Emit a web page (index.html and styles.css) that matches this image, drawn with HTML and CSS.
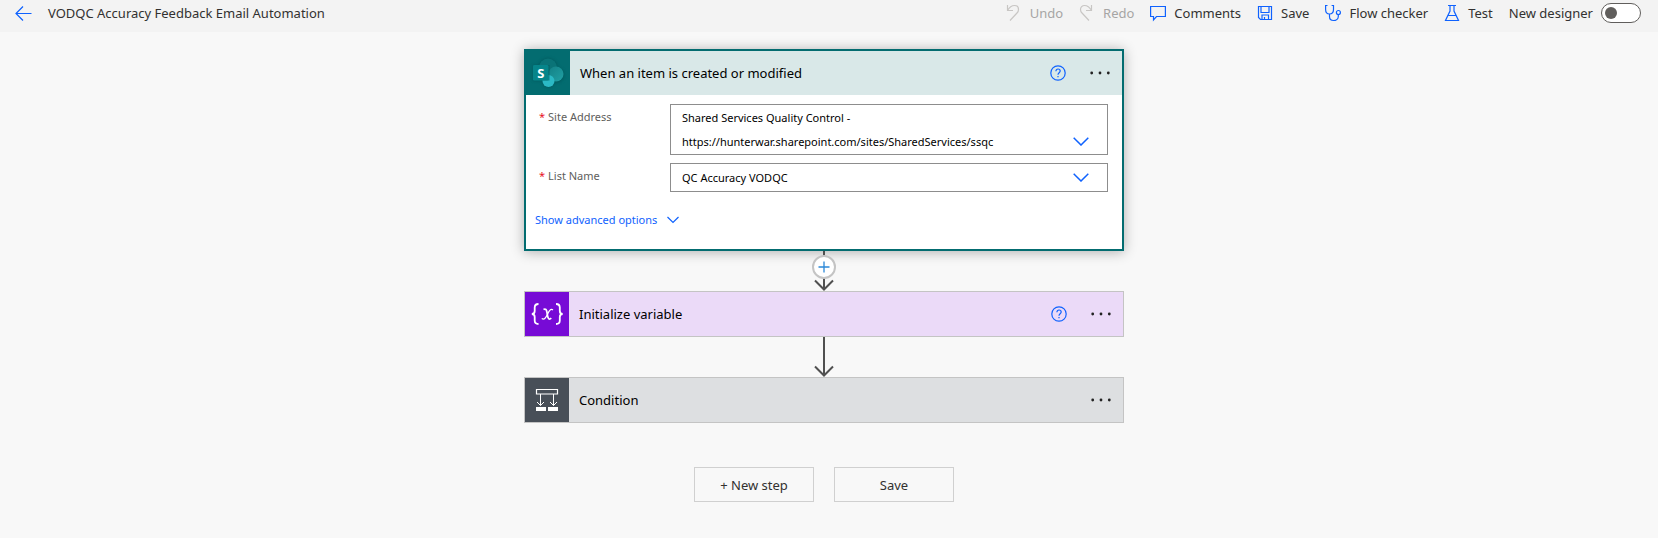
FILE: index.html
```html
<!DOCTYPE html>
<html lang="en">
<head>
<meta charset="utf-8">
<meta name="viewport" content="width=device-width, initial-scale=1">
<title>VODQC Accuracy Feedback Email Automation</title>
<link rel="stylesheet" href="styles.css">
</head>
<body>
<header class="topbar">
  <button class="back" type="button" aria-label="Back">
    <svg width="18" height="16" viewBox="0 0 18 16" class="line"><path d="M16.500 8.500H1M8 1.500l-7 7 7 7"/></svg>
  </button>
  <h1 class="title">VODQC Accuracy Feedback Email Automation</h1>
  <nav class="tools" aria-label="Flow commands">
    <button class="tool" type="button" disabled>
      <svg width="16" height="18" viewBox="0 0 16 18" class="line"><path d="M1.500 1v5.500H7M1.500 6.500C3.500 3 6 1.500 8.500 1.500c2.300 0 4 1.700 4 4 0 1.500-.6 2.600-1.500 3.500L4 16.500"/></svg>
      <span>Undo</span>
    </button>
    <button class="tool" type="button" disabled>
      <svg width="16" height="18" viewBox="0 0 16 18" class="line"><path d="M12.500 1v5.500H7M12.500 6.500C10.500 3 8 1.500 5.500 1.500c-2.300 0-4 1.700-4 4 0 1.500.6 2.600 1.500 3.500l7 7.500"/></svg>
      <span>Redo</span>
    </button>
    <button class="tool" type="button">
      <svg width="16" height="18" viewBox="0 0 16 18" class="line"><path d="M.6 2.500h14.800v10H6.500L3.500 16v-3.500H.6z"/></svg>
      <span>Comments</span>
    </button>
    <button class="tool" type="button">
      <svg width="16" height="18" viewBox="0 0 16 18" class="line"><path d="M1.500 2.500h13v13H3.500l-2-2zM4 2.500v6h8v-6M5 15.500v-4.500h6.500v4.500M7.500 13v2.500"/></svg>
      <span>Save</span>
    </button>
    <button class="tool" type="button">
      <svg width="16" height="18" viewBox="0 0 16 18" class="line"><path d="M2.500 1.500H.6v4c0 2.800 1.600 4.500 3.900 4.500s4-1.700 4-4.500v-4H6.600M4.500 10v2.500c0 2.500 1.500 4 4 4s4.800-1.500 4.800-4v-2"/><circle cx="13.400" cy="8.500" r="2"/></svg>
      <span>Flow checker</span>
    </button>
    <button class="tool" type="button">
      <svg width="16" height="18" viewBox="0 0 16 18" class="line"><path d="M4 1.500h8M6 1.500v5.500L1.500 16.500h13L10 7V1.500M3.800 11.500h8.400"/></svg>
      <span>Test</span>
    </button>
    <label class="designer">New designer<input class="switch" type="checkbox" role="switch"></label>
  </nav>
</header>

<main class="canvas">
  <section class="card card-trigger">
    <div class="card-head">
      <span class="tile tile-sharepoint">
        <svg width="44" height="44" viewBox="0 0 44 44" aria-hidden="true">
          <defs>
            <filter id="soft" x="-30%" y="-30%" width="160%" height="160%"><feGaussianBlur stdDeviation="1.500"/></filter>
            <linearGradient id="mid" x1="0" y1="0" x2="1" y2="1"><stop offset="0" stop-color="#138186"/><stop offset="1" stop-color="#21a0a4"/></linearGradient>
          </defs>
          <g filter="url(#soft)" fill="#004f52" opacity=".55"><circle cx="22" cy="17" r="10"/><circle cx="30" cy="24" r="8"/><rect x="7" y="14" width="16" height="16"/><circle cx="22.500" cy="30" r="6.500"/></g>
          <circle cx="22" cy="16.500" r="9" fill="#0a7377"/>
          <circle cx="30" cy="23" r="7.500" fill="url(#mid)"/>
          <circle cx="22.500" cy="30" r="6" fill="#2bb9c5"/>
          <path d="M16 14h7.500v15.500H17l-1-2z" fill="#005356" opacity=".55"/>
          <rect x="7" y="14" width="15.500" height="15.500" rx="1.300" fill="#06858a"/>
          <text x="14.800" y="26.500" class="logo-letter">S</text>
        </svg>
      </span>
      <h2 class="card-title">When an item is created or modified</h2>
      <button class="icon-btn help" type="button" aria-label="Help"><svg width="16" height="16" viewBox="0 0 16 16" class="line"><circle cx="8" cy="8" r="7.200"/><path d="M5.900 6.200C5.900 4.800 6.800 4 8 4s2.200.8 2.200 2c0 1.700-2.200 1.800-2.200 3.700M8 11v1.300"/></svg></button>
      <button class="icon-btn more" type="button" aria-label="More"><svg width="20" height="4" viewBox="0 0 20 4"><circle cx="1.700" cy="2" r="1.400"/><circle cx="10" cy="2" r="1.400"/><circle cx="18.300" cy="2" r="1.400"/></svg></button>
    </div>
    <div class="card-body">
      <div class="field">
        <label class="field-label" for="site"><span class="req">*</span>Site Address</label>
        <button class="combo" id="site" type="button" role="combobox" aria-haspopup="listbox" aria-expanded="false">
          <span>Shared Services Quality Control -<br>https://hunterwar.sharepoint.com/sites/SharedServices/ssqc</span>
          <svg width="16" height="9" viewBox="0 0 16 9" class="chev"><path d="M.7.7 8 8 15.300.7"/></svg>
        </button>
      </div>
      <div class="field">
        <label class="field-label" for="list"><span class="req">*</span>List Name</label>
        <div class="select-wrap">
          <select class="select" id="list"><option>QC Accuracy VODQC</option></select>
          <svg width="16" height="9" viewBox="0 0 16 9" class="chev"><path d="M.7.7 8 8 15.300.7"/></svg>
        </div>
      </div>
      <button class="advanced" type="button">Show advanced options
        <svg width="12" height="8" viewBox="0 0 12 8" class="line"><path d="M.5 1 6 6.500 11.500 1"/></svg>
      </button>
    </div>
  </section>

  <div class="connector">
    <svg width="20" height="40" viewBox="0 0 20 40" class="arrow" aria-hidden="true"><path d="M10 0v38M1 29.500l9 9 9-9"/></svg>
    <button class="add" type="button" aria-label="Insert a new step"><svg width="12" height="12" viewBox="0 0 12 12"><path d="M6 .5v11M.5 6h11"/></svg></button>
  </div>

  <section class="card card-variable">
    <div class="card-head">
      <span class="tile tile-variable">
        <svg width="44" height="44" viewBox="0 0 44 44" class="glyph" aria-hidden="true">
          <path d="M13.500 12c-3 0-3.800 1-3.800 3.500v3.500c0 2-.9 3-2.900 3 2 0 2.900 1 2.900 3v3.500c0 2.500.8 3.500 3.800 3.500M31 12c3 0 3.800 1 3.800 3.500v3.500c0 2 .9 3 2.900 3-2 0-2.900 1-2.900 3v3.500c0 2.500-.8 3.500-3.800 3.500" stroke-width="1.800"/>
          <path d="M18.500 17.500c2-1.300 3 .2 3.500 3l.6 3.500c.5 2.800 1.600 4.100 3.700 2.200" stroke-width="1.700"/><path d="M28 18c-2.500-2-4.200 1.500-5.600 4.500s-3 5.700-5.700 4" stroke-width="1.200"/>
        </svg>
      </span>
      <h2 class="card-title">Initialize variable</h2>
      <button class="icon-btn help" type="button" aria-label="Help"><svg width="16" height="16" viewBox="0 0 16 16" class="line"><circle cx="8" cy="8" r="7.200"/><path d="M5.900 6.200C5.900 4.800 6.800 4 8 4s2.200.8 2.200 2c0 1.700-2.200 1.800-2.200 3.700M8 11v1.300"/></svg></button>
      <button class="icon-btn more" type="button" aria-label="More"><svg width="20" height="4" viewBox="0 0 20 4"><circle cx="1.700" cy="2" r="1.400"/><circle cx="10" cy="2" r="1.400"/><circle cx="18.300" cy="2" r="1.400"/></svg></button>
    </div>
  </section>

  <div class="connector">
    <svg width="20" height="40" viewBox="0 0 20 40" class="arrow" aria-hidden="true"><path d="M10 0v38M1 29.500l9 9 9-9"/></svg>
  </div>

  <section class="card card-condition">
    <div class="card-head">
      <span class="tile tile-condition">
        <svg width="44" height="44" viewBox="0 0 44 44" class="glyph" aria-hidden="true">
          <path d="M11.500 11.500h21v4.500h-21z" stroke-width="1.200"/>
          <path d="M15.500 16v11.500M12 24l3.500 3.500 3.500-3.500M28.500 16v11.500M25 24l3.500 3.500 3.500-3.500" stroke-width="1"/>
          <path d="M11 29h10v4H11zM23 29h10v4H23z" class="solid"/>
        </svg>
      </span>
      <h2 class="card-title">Condition</h2>
      <button class="icon-btn more" type="button" aria-label="More"><svg width="20" height="4" viewBox="0 0 20 4"><circle cx="1.700" cy="2" r="1.400"/><circle cx="10" cy="2" r="1.400"/><circle cx="18.300" cy="2" r="1.400"/></svg></button>
    </div>
  </section>

  <div class="actions">
    <button class="action" type="button">+ New step</button>
    <button class="action" type="button">Save</button>
  </div>
</main>
</body>
</html>
```
FILE: styles.css
```css
* { box-sizing: border-box; }

body {
  margin: 0;
  min-height: 100vh;
  background: #f8f8f8;
  color: #323130;
  font: 13px/20px "Noto Sans", "Open Sans", sans-serif;
}

button, select, input { font: inherit; color: inherit; }
button { margin: 0; padding: 0; border: 0; background: none; cursor: pointer; }
svg { display: block; flex: none; }
.line { fill: none; stroke: #0f62fe; stroke-width: 1.2; }

.topbar {
  display: flex;
  align-items: center;
  min-height: 32px;
  padding: 0 17px 6px 15px;
  background: #f3f3f3;
}
.back { margin-right: 15px; }
.title { margin: 0; font-size: 13px; font-weight: 400; white-space: nowrap; }
.tools { display: flex; align-items: center; gap: 16px; margin-left: auto; white-space: nowrap; }
.tool { display: flex; align-items: center; gap: 8px; }
.tool:disabled { color: #a6a5a4; cursor: default; }
.tool:disabled .line { stroke: #c8c6c4; }
.designer { display: flex; align-items: center; gap: 8px; }
.switch {
  appearance: none;
  display: flex;
  align-items: center;
  width: 40px;
  height: 20px;
  margin: 0;
  padding: 0 3px;
  border: 1px solid #605e5c;
  border-radius: 10px;
  background: #fff;
}
.switch::before { content: ""; width: 12px; height: 12px; border-radius: 50%; background: #605e5c; }
.switch:checked { justify-content: flex-end; }

.canvas {
  display: flex;
  flex-direction: column;
  align-items: center;
  padding: 17px 10px 36px 0;
}

.card { width: 100%; max-width: 600px; border: 1px solid #c4c4c4; }
.card-head { display: flex; align-items: center; height: 44px; padding-right: 12px; }
.tile { width: 44px; height: 44px; margin-right: 10px; }
.card-title { flex: 1; margin: 0; color: #000; font-size: 13px; font-weight: 400; }
.help { margin-right: 24px; }
.more { fill: #222; }
.card-trigger { border: 2px solid #036c70; background: #fff; box-shadow: 0 1px 12px rgba(0, 0, 0, .3); }
.card-trigger .card-head { background: #d9e8e8; }
.card-variable { background: #ebdaf8; }
.card-condition { background: #dddfe1; }
.tile-sharepoint { background: #036c70; }
.tile-variable { background: #770bd6; }
.tile-condition { background: #484f58; }
.glyph { fill: none; stroke: #fff; }
.solid { fill: #fff; stroke: none; }
.logo-letter { fill: #fff; font: 700 13px "Noto Sans", sans-serif; text-anchor: middle; }

.card-body { padding: 9px 14px 19px 9px; font-size: 11px; }
.field { display: flex; align-items: flex-start; margin-bottom: 8px; }
.field-label { flex: 0 0 135px; padding: 3px 0 0 4px; color: #605e5c; }
.req { margin-right: 3px; color: #e81123; }
.combo, .select { border: 1px solid #8d8d8d; background: #fff; color: #000; font-size: 11px; text-align: left; }
.combo {
  flex: 1;
  display: flex;
  align-items: flex-end;
  justify-content: space-between;
  padding: 1px 18px 0 11px;
  line-height: 24px;
}
.combo .chev { margin-bottom: 8px; }
.chev { fill: none; stroke: #0f62fe; stroke-width: 1.5; }
.select-wrap { flex: 1; display: grid; align-items: center; }
.select-wrap > * { grid-area: 1 / 1; }
.select { appearance: none; width: 100%; height: 29px; margin: 0; padding: 0 40px 0 11px; border-radius: 0; }
.select-wrap .chev { justify-self: end; margin-right: 19px; pointer-events: none; }
.advanced { display: flex; align-items: center; gap: 10px; margin-top: 18px; color: #0f62fe; font-size: 11px; }

.connector { position: relative; display: flex; justify-content: center; }
.arrow { fill: none; stroke: #505050; stroke-width: 2; }
.add {
  position: absolute;
  top: 4px;
  display: grid;
  place-items: center;
  width: 24px;
  height: 24px;
  border: 2px solid #c4c4c4;
  border-radius: 50%;
  background: #fff;
}
.add path { stroke: #2b88d8; stroke-width: 1.3; }

.actions { display: flex; gap: 20px; margin-top: 44px; }
.action { width: 120px; height: 35px; border: 1px solid #d0d0d0; }
```
